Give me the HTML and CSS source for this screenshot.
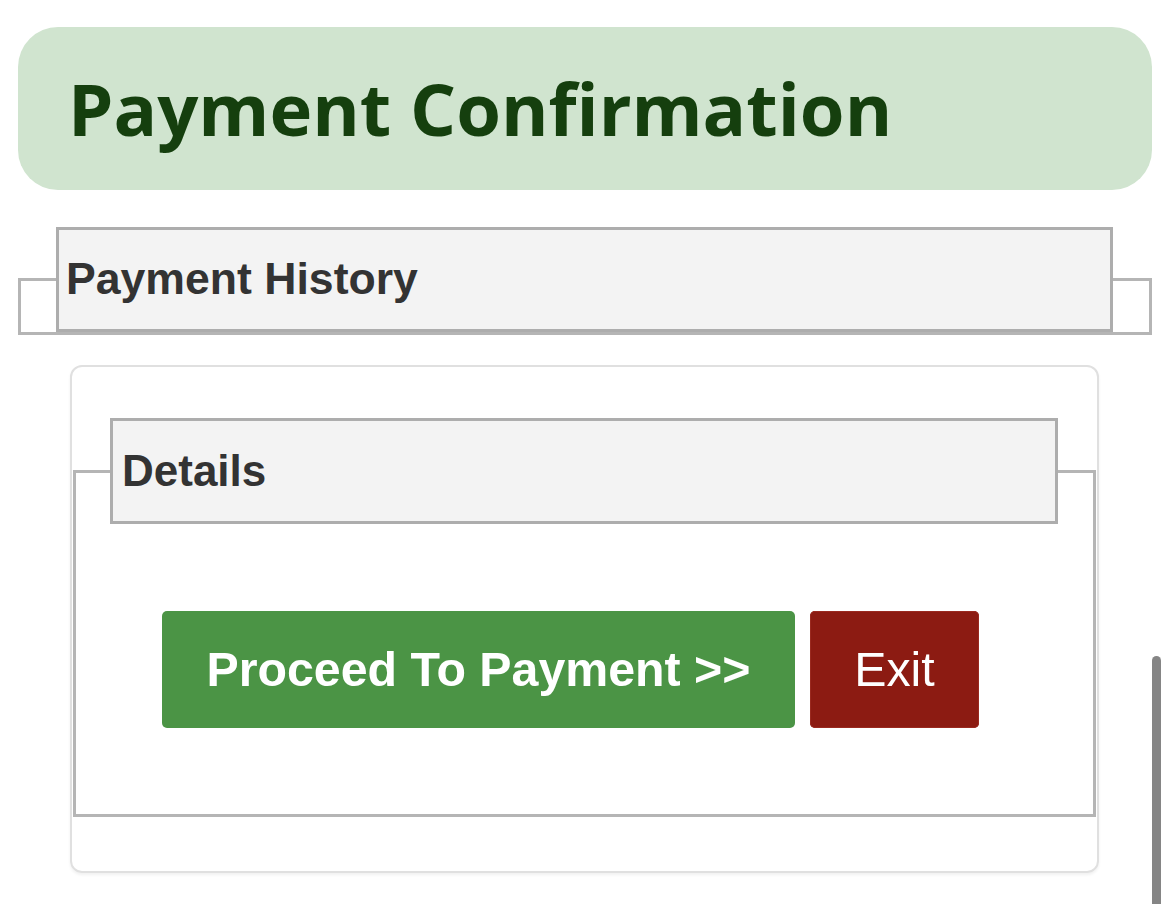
FILE: index.html
```html
<!DOCTYPE html>
<html lang="en">
<head>
<meta charset="utf-8">
<title>Payment Confirmation</title>
<link rel="stylesheet" href="styles.css">
</head>
<body>
  <header class="title-bar">
    <h1 class="title">Payment Confirmation</h1>
  </header>

  <fieldset class="history">
    <legend class="legend legend-history">Payment History</legend>
  </fieldset>

  <section class="card">
    <fieldset class="details">
      <legend class="legend legend-details">Details</legend>
      <div class="actions">
        <button class="btn btn-proceed" type="button">Proceed To Payment &gt;&gt;</button>
        <button class="btn btn-exit" type="button">Exit</button>
      </div>
    </fieldset>
  </section>

  <div class="scroll-indicator"></div>
</body>
</html>
```

FILE: styles.css
```css
html, body {
  margin: 0;
  padding: 0;
  background: #ffffff;
}

body {
  padding: 27px 18px 0 18px;
  font-family: "Liberation Sans", Arial, sans-serif;
  overflow: hidden;
  height: 904px;
  box-sizing: border-box;
}

.title-bar {
  background: #d0e4cf;
  border-radius: 40px;
  height: 163px;
  display: flex;
  align-items: center;
  padding-left: 50px;
  box-sizing: border-box;
}

.title {
  margin: 0;
  font-family: "Open Sans", "Noto Sans", sans-serif;
  font-weight: 700;
  font-size: 72.4px;
  line-height: 1;
  color: #153f0e;
  letter-spacing: 0;
}

.history {
  margin: 37px 0 0 0;
  border: 3px solid #b5b5b5;
  padding: 0 0 0 35px;
  min-width: 0;
}

.legend {
  background: #f3f3f3;
  border: 3px solid #adadad;
  font-family: "Liberation Sans", Arial, sans-serif;
  font-weight: 700;
  font-size: 44px;
  line-height: 50px;
  color: #333333;
  padding: 24px 7px 25px 7px;
  box-sizing: border-box;
}

.legend-history {
  width: 1057px;
  font-size: 44.6px;
}

.card {
  margin: 30px 53px 0 52px;
  border: 2px solid #e0e0e0;
  border-radius: 12px;
  padding: 51px 1px 54px 1px;
  box-shadow: 0 2px 3px rgba(0, 0, 0, 0.06);
}

.details {
  margin: 0;
  border: 3px solid #b5b5b5;
  padding: 0 0 0 34px;
  min-width: 0;
}

.legend-details {
  width: 948px;
  padding: 25px 9px;
}

.actions {
  display: flex;
  gap: 15px;
  padding: 87px 0 86px 52px;
}

.btn {
  border: none;
  border-radius: 5px;
  color: #ffffff;
  font-family: "Liberation Sans", Arial, sans-serif;
  font-size: 48.3px;
  line-height: 55px;
  height: 117px;
  padding: 0 40px;
  cursor: pointer;
}

.btn-proceed {
  background: #4b9445;
  font-weight: 700;
  width: 633px;
}

.btn-exit {
  background: #8c1b12;
  font-weight: 400;
  width: 169px;
  box-shadow: inset 0 0 0 1px #9a2a20;
}

.scroll-indicator {
  position: fixed;
  left: 1152px;
  top: 656px;
  width: 9px;
  height: 260px;
  background: #858585;
  border-radius: 5px;
}
```
